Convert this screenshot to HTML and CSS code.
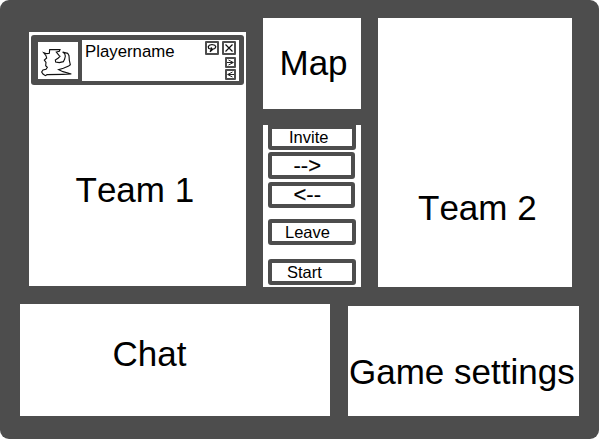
FILE: index.html
```html
<!DOCTYPE html>
<html lang="en">
<head>
<meta charset="utf-8">
<title>Game lobby</title>
<link rel="stylesheet" href="styles.css">
</head>
<body>
<main class="lobby">
  <div class="top">
    <section class="panel team-one">
      <article class="player">
        <svg class="avatar" viewBox="114 126 120 111" fill="none" stroke="#111" stroke-width="3.4">
          <path d="M149 149H180L178 154 169 156 177 166 180 169 175 174 166 180 167 186 178 188 190 185 194 177 196 168 194 161 188 156 203 160 207 167 208 181 211 194 206 198 190 205 176 209 189 215 214 222 188 223 141 224 136 227 129 222 125 216 129 210 138 208 142 202 137 197 138 187 133 180 140 174 138 167 131 158 140 161 148 160Z"/>
        </svg>
        <div class="player-body">
          <span class="player-name">Playername</span>
          <div class="actions">
            <div class="action-row">
              <button class="icon" aria-label="Message"><svg viewBox="0 0 10 10" fill="none" stroke="#111" stroke-width="1.2"><path d="M3.8 6 1.8 5.5 1.2 3.8 2.3 2.2 5 1.5 7.8 2.2 8.8 3.8 7.8 5.5 5.8 6.2 3 8.7 4.8 5.5 3.8 4.5"/></svg></button>
              <button class="icon" aria-label="Remove"><svg viewBox="0 0 10 10" fill="none" stroke="#111" stroke-width="1.2"><path d="M1.5 1.5 8.5 8.5M8.5 1.5 1.5 8.5"/></svg></button>
            </div>
            <button class="icon small" aria-label="Move right"><svg viewBox="0 0 7 7" fill="none" stroke="#222" stroke-width="1"><path d="M0 3.5H6.3M1.5 1 6.3 3.5 1.5 6"/></svg></button>
            <button class="icon small" aria-label="Move left"><svg viewBox="0 0 7 7" fill="none" stroke="#222" stroke-width="1"><path d="M7 3.5H.7M5.5 1 .7 3.5 5.5 6"/></svg></button>
          </div>
        </div>
      </article>
      <h2>Team 1</h2>
    </section>
    <div class="middle">
      <section class="panel map"><h2>Map</h2></section>
      <nav class="panel controls">
        <button class="control invite">Invite</button>
        <button class="control arrow right">--&gt;</button>
        <button class="control arrow left">&lt;--</button>
        <button class="control leave">Leave</button>
        <button class="control start">Start</button>
      </nav>
    </div>
    <section class="panel team-two"><h2>Team 2</h2></section>
  </div>
  <div class="bottom">
    <section class="panel chat"><h2>Chat</h2></section>
    <section class="panel settings"><h2>Game settings</h2></section>
  </div>
</main>
</body>
</html>
```
FILE: styles.css
```css
* { box-sizing: border-box; }

body {
  margin: 0;
  background: #fff;
  color: #000;
  font: 16.5px/20px "Liberation Sans", Arial, sans-serif;
  font-kerning: none;
}

.lobby {
  width: 599px;
  height: 439px;
  padding: 18px 20px 0;
  border-radius: 9px;
  background: #4d4d4d;
  overflow: hidden;
}

.top {
  display: flex;
  align-items: flex-start;
  height: 286px;
  padding-left: 9px;
}

.bottom {
  display: flex;
  align-items: flex-end;
  gap: 17px;
  height: 112px;
}

.panel { background: #fff; }

h2 {
  margin: 0;
  font-size: 35px;
  font-weight: 400;
  line-height: 40px;
  white-space: nowrap;
}

.team-one {
  width: 217px;
  height: 254px;
  margin: 14px 17px 0 0;
  padding: 3px 2px 0;
}
.team-one h2 { padding: 85px 0 0 44.5px; }

.middle {
  display: flex;
  flex-direction: column;
  gap: 16px;
  width: 98px;
  margin-right: 17px;
}

.map {
  height: 91px;
  padding: 25px 0 0 16.5px;
}

.team-two {
  width: 194px;
  height: 269px;
  padding: 170px 0 0 40px;
}

.chat {
  width: 310px;
  height: 112px;
  padding: 30px 0 0 92.5px;
}

.settings {
  width: 231px;
  height: 110px;
  margin-left: 1px;
  padding: 46px 0 0 1px;
}

.player {
  display: flex;
  gap: 4px;
  height: 50px;
  padding: 5px 5px 4px 7px;
  border-radius: 3px;
  background: #4d4d4d;
}

.avatar {
  width: 40px;
  height: 37px;
  margin-top: 2px;
  background: #fff;
}

.player-body {
  display: flex;
  flex: 1;
  justify-content: space-between;
  padding: 1px 3px 0 2px;
  background: #fff;
}

.player-name {
  padding: 1px 0 0 1px;
  font-size: 16.8px;
}

.actions {
  display: flex;
  flex-direction: column;
  align-items: flex-end;
  gap: 1px;
}

.action-row {
  display: flex;
  gap: 3px;
  margin-bottom: 1px;
}

button {
  border: 4px solid #4d4d4d;
  border-radius: 3px;
  background: #fff;
  color: inherit;
  font: inherit;
  font-kerning: none;
}

.icon {
  display: flex;
  width: 14px;
  height: 14px;
  padding: 0;
  border-width: 2px;
  border-radius: 1px;
}
.icon svg { width: 10px; height: 10px; }
.small {
  width: 11px;
  height: 11px;
}
.small svg { width: 7px; height: 7px; }

.controls {
  display: flex;
  flex-direction: column;
  height: 162px;
  padding-left: 5px;
}

.control {
  display: flex;
  align-items: center;
  width: 88px;
  height: 26px;
  padding: 0 0 0 13px;
}
.invite {
  height: 25px;
  padding: 0 0 2px 17px;
  border-radius: 0 0 3px 3px;
}
.arrow {
  width: 87px;
  padding-left: 21.5px;
  font-size: 22px;
  -webkit-text-stroke: .2px #000;
}
.right { height: 27px; margin-top: 2px; }
.left { margin-top: 3px; }
.leave { margin-top: 11px; }
.start { margin-top: 14px; padding-left: 15px; }
```
